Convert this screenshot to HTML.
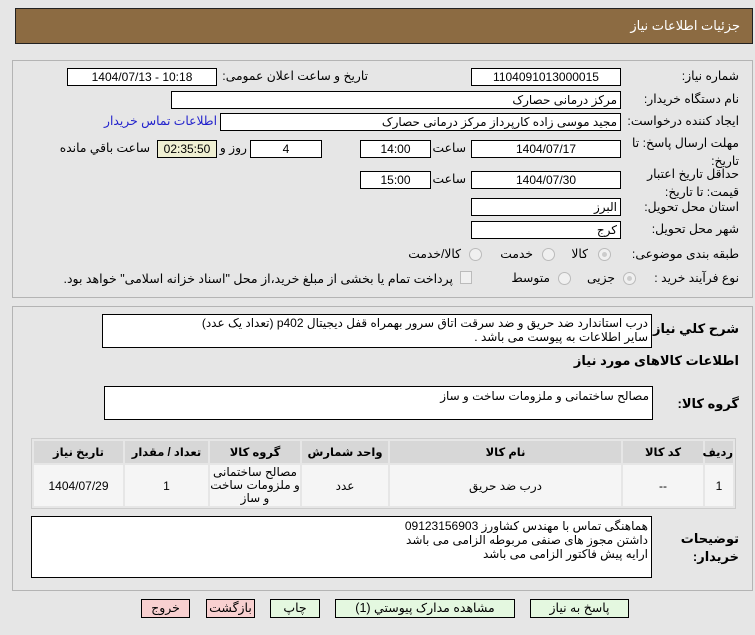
<!DOCTYPE html>
<html><head><meta charset="utf-8"><style>
*{box-sizing:border-box;margin:0;padding:0}
body{width:755px;height:635px;background:#e6e6e6;font-family:"Liberation Sans","DejaVu Sans",sans-serif;font-size:12px;color:#000;position:relative;overflow:hidden}
.a{position:absolute;white-space:nowrap}
.in{position:absolute;background:#fff;border:1px solid #000;height:18px;line-height:16px;text-align:center;font-size:12px;white-space:nowrap;overflow:hidden}
.r{text-align:right;padding-right:3px}
.lbl{position:absolute;white-space:nowrap;direction:rtl;text-align:right;font-size:12.3px}
.b{font-weight:bold;font-size:13px}
.w{white-space:normal}
.panel{position:absolute;border:1px solid #b4b4b4;background:#e6e6e6}
.rad{position:absolute;width:13px;height:13px;border-radius:50%;border:1px solid #bbb;background:#f0f0f0}
.rad.on::after{content:"";position:absolute;left:3px;top:3px;width:5px;height:5px;border-radius:50%;background:#ccc}
table{position:absolute;border-collapse:separate;border-spacing:2px;background:#e6e6e6;border:1px solid #ccc;table-layout:fixed}
th{background:#d7d7d7;font-weight:bold;height:22px;font-size:11.5px}
td{background:#f5f5f5;text-align:center;font-size:12px}
.btn{position:absolute;height:19px;border:1px solid #000;text-align:center;line-height:17px;font-size:12.5px;direction:rtl;white-space:nowrap}
.ta{position:absolute;background:#fff;border:1px solid #000;direction:rtl;text-align:right;font-size:12px;padding:2px 3px;line-height:15px;white-space:nowrap;overflow:hidden}
</style></head><body>
<div class="a" style="left:15px;top:8px;width:738px;height:36px;background:#8c6b42;border:1px solid #222"></div>
<div class="lbl" style="right:15px;top:18px;color:#fff;font-size:13px">جزئیات اطلاعات نیاز</div>

<div class="panel" style="left:12px;top:60px;width:741px;height:238px"></div>
<div class="lbl" style="right:16px;top:69px">شماره نیاز:</div>
<div class="in" style="left:471px;top:68px;width:150px">1104091013000015</div>
<div class="lbl" style="right:387px;top:69px">تاریخ و ساعت اعلان عمومی:</div>
<div class="in" style="left:67px;top:68px;width:150px">1404/07/13 - 10:18</div>

<div class="lbl" style="right:16px;top:92px">نام دستگاه خریدار:</div>
<div class="in r" style="left:171px;top:91px;width:450px;direction:rtl">مرکز درمانی حصارک</div>

<div class="lbl" style="right:16px;top:114px">ایجاد کننده درخواست:</div>
<div class="in r" style="left:220px;top:113px;width:401px;direction:rtl">مجید  موسی زاده کارپرداز مرکز درمانی حصارک</div>
<div class="lbl" style="right:538px;top:114px;color:#2222cc">اطلاعات تماس خریدار</div>

<div class="lbl w" style="right:16px;top:134px;line-height:18px;width:112px">مهلت ارسال پاسخ: تا تاریخ:</div>
<div class="in" style="left:471px;top:140px;width:150px">1404/07/17</div>
<div class="lbl" style="right:289px;top:141px">ساعت</div>
<div class="in" style="left:360px;top:140px;width:71px">14:00</div>
<div class="in" style="left:250px;top:140px;width:72px">4</div>
<div class="lbl" style="right:508px;top:141px">روز و</div>
<div class="in" style="left:157px;top:140px;width:60px;background:#efefd2">02:35:50</div>
<div class="lbl" style="right:605px;top:141px">ساعت باقي مانده</div>

<div class="lbl w" style="right:16px;top:165px;line-height:18px;width:98px">حداقل تاریخ اعتبار قیمت: تا تاریخ:</div>
<div class="in" style="left:471px;top:171px;width:150px">1404/07/30</div>
<div class="lbl" style="right:289px;top:172px">ساعت</div>
<div class="in" style="left:360px;top:171px;width:71px">15:00</div>

<div class="lbl" style="right:16px;top:200px">استان محل تحویل:</div>
<div class="in r" style="left:471px;top:198px;width:150px;direction:rtl">البرز</div>
<div class="lbl" style="right:16px;top:222px">شهر محل تحویل:</div>
<div class="in r" style="left:471px;top:221px;width:150px;direction:rtl">کرج</div>

<div class="lbl" style="right:16px;top:247px">طبقه بندی موضوعی:</div>
<div class="rad on" style="left:598px;top:248px"></div><div class="lbl" style="right:167px;top:247px">کالا</div>
<div class="rad" style="left:542px;top:248px"></div><div class="lbl" style="right:222px;top:247px">خدمت</div>
<div class="rad" style="left:469px;top:248px"></div><div class="lbl" style="right:294px;top:247px">کالا/خدمت</div>

<div class="lbl" style="right:16px;top:271px">نوع فرآیند خرید :</div>
<div class="rad on" style="left:623px;top:272px"></div><div class="lbl" style="right:140px;top:271px">جزیی</div>
<div class="rad" style="left:558px;top:272px"></div><div class="lbl" style="right:205px;top:271px">متوسط</div>
<div class="a" style="left:460px;top:271px;width:12px;height:13px;border:1px solid #bbb;background:#f0f0f0"></div>
<div class="lbl" style="right:302px;top:271px;font-size:12.5px">پرداخت تمام یا بخشی از مبلغ خرید،از محل "اسناد خزانه اسلامی" خواهد بود.</div>

<div class="panel" style="left:12px;top:306px;width:741px;height:285px"></div>
<div class="lbl b" style="right:16px;top:321px">شرح کلي نیاز:</div>
<div class="ta" style="left:102px;top:314px;width:550px;height:34px;padding:1px 3px;line-height:14px">درب استاندارد ضد حریق و ضد سرقت اتاق سرور بهمراه قفل دیجیتال p402   (تعداد یک عدد)<br>سایر اطلاعات به پیوست می باشد .</div>
<div class="lbl b" style="right:16px;top:353px">اطلاعات کالاهای مورد نیاز</div>
<div class="lbl b" style="right:16px;top:396px">گروه کالا:</div>
<div class="ta" style="left:104px;top:386px;width:549px;height:34px">مصالح ساختمانی و ملزومات ساخت و ساز</div>

<table style="left:31px;top:438px;width:705px;direction:rtl">
<tr><th style="width:28px">ردیف</th><th style="width:80px">کد کالا</th><th style="width:231px">نام کالا</th><th style="width:86px">واحد شمارش</th><th style="width:90px">گروه کالا</th><th style="width:83px">تعداد / مقدار</th><th>تاریخ نیاز</th></tr>
<tr><td style="height:41px">1</td><td>--</td><td>درب ضد حریق</td><td>عدد</td><td style="line-height:13px">مصالح ساختمانی و ملزومات ساخت و ساز</td><td>1</td><td>1404/07/29</td></tr>
</table>

<div class="lbl b w" style="right:16px;top:530px;line-height:18px;width:60px">توضیحات خریدار:</div>
<div class="ta" style="left:31px;top:516px;width:621px;height:62px;line-height:14px"> هماهنگی تماس با مهندس کشاورز 09123156903<br>داشتن مجوز های صنفی مربوطه الزامی می باشد<br>ارایه پیش فاکتور الزامی می باشد</div>

<div class="btn" style="left:141px;top:599px;width:49px;background:#f8d0d0">خروج</div>
<div class="btn" style="left:206px;top:599px;width:49px;background:#f8d0d0">بازگشت</div>
<div class="btn" style="left:270px;top:599px;width:50px;background:#e4f8e0">چاپ</div>
<div class="btn" style="left:335px;top:599px;width:180px;background:#e4f8e0">مشاهده مدارک پیوستي (1)</div>
<div class="btn" style="left:530px;top:599px;width:99px;background:#e4f8e0">پاسخ به نیاز</div>
</body></html>
